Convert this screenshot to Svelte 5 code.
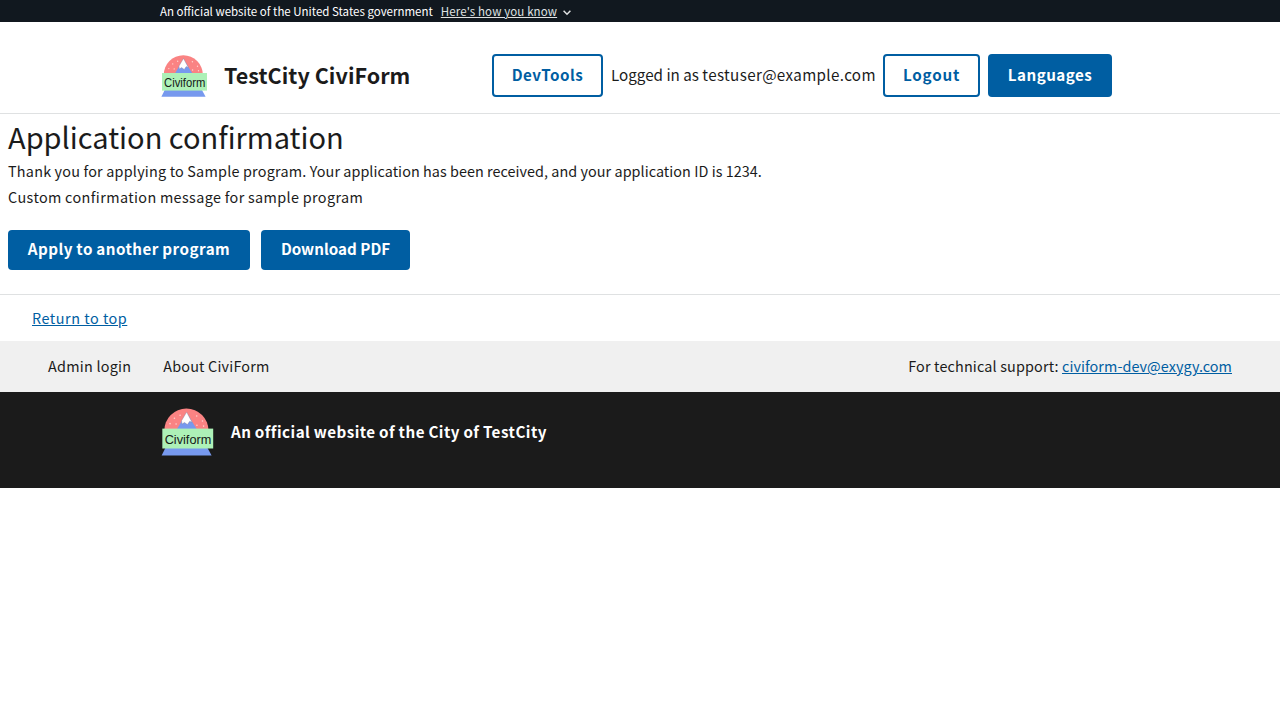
<script>
  const account = 'testuser@example.com';
  const flakes = [[12.7, 10.9], [17.7, 8.2], [32.4, 8.8], [37.5, 13.2], [32.6, 17], [8.8, 15.6], [14.2, 15.9], [38.5, 17.8]];
</script>

{#snippet logo()}
  <svg class="logo" viewBox="0 0 48 46" aria-label="Civiform">
    <path d="M3.7 22 A19.6 19.7 0 0 1 42.9 22 Z" fill="#fa8383" />
    {#each flakes as [x, y]}
      <circle cx={x} cy={y} r=".7" fill="#ffd3cf" />
    {/each}
    <path d="M14.6 21 L23.5 6 L32.8 21 Z" fill="#7799ee" />
    <path d="M23.5 5.4 L28.3 14.4 L26.2 13.6 L24.2 16.4 L21.6 14.6 L19.4 16 L19 13 Z" fill="#fff" stroke="#817d96" stroke-width=".35" />
    <path d="M5.2 36 H41.4 L45.6 43.8 H1.4 Z" fill="#7799ee" />
    <rect x="2" y="20" width="45" height="17.6" fill="#adf1b7" />
    <text x="4.1" y="33.7" textLength="41.2" lengthAdjust="spacingAndGlyphs" font-size="12" fill="#152018">Civiform</text>
  </svg>
{/snippet}

<div class="page">
  <div class="banner">
    <span>An official website of the United States government</span>
    <a href="#how">Here's how you know</a>
    <svg class="chevron" viewBox="0 0 8 6"><path d="M.6 .8 L4 4.2 L7.4 .8" /></svg>
  </div>

  <header>
    <div class="brand">{@render logo()}<strong>TestCity CiviForm</strong></div>
    <nav>
      <button class="outline dev">DevTools</button>
      <span class="who">Logged in as <span class="account">{account}</span></span>
      <button class="outline out">Logout</button>
      <button class="lang">Languages</button>
    </nav>
  </header>

  <main>
    <h1>Application confirmation</h1>
    <p><span class="thanks">Thank you for applying to Sample program.</span>{' '}<span class="received">Your application has been received, and your application ID is 1234.</span></p>
    <p class="custom">Custom confirmation message for sample program</p>
    <div class="actions">
      <button class="apply">Apply to another program</button>
      <button class="pdf">Download PDF</button>
    </div>
  </main>

  <footer>
    <div class="top"><a href="#top">Return to top</a></div>
    <div class="links">
      <span class="admin">Admin login</span>
      <span class="about">About CiviForm</span>
      <span class="support">For technical support: <a href="mailto:civiform-dev@exygy.com">civiform-dev@exygy.com</a></span>
    </div>
    <div class="identity">{@render logo()}<strong>An official website of the City of TestCity</strong></div>
  </footer>
</div>

<style>
  .page {
    font-family: "Noto Sans CJK SC", "Noto Sans", sans-serif;
    font-size: 15.2px;
    color: #1b1b1b;
    background: #fff;
    white-space: nowrap;
  }
  a { color: #005ea2; text-decoration: underline; }
  h1, p { margin: 0; font-weight: 400; }
  .banner {
    display: flex;
    box-sizing: border-box;
    height: 22px;
    padding-left: 160px;
    background: #11181f;
    color: #fff;
    font-size: 11.5px;
    line-height: 22px;
  }
  .banner a { margin-left: 8px; color: #dfe1e2; letter-spacing: .12px; }
  .chevron { width: 8px; height: 6px; margin: 10px 0 0 6px; fill: none; stroke: #dfe1e2; stroke-width: 1.5; }
  header {
    display: flex;
    justify-content: space-between;
    box-sizing: border-box;
    height: 92px;
    padding: 31px 168px 0 160px;
    border-bottom: 1px solid #dfe1e2;
  }
  .brand { display: flex; gap: 16px; }
  .brand strong { font-size: 21.5px; line-height: 43px; letter-spacing: .05px; }
  .brand .logo { width: 48px; height: 46px; }
  .logo { display: block; font-family: "Liberation Sans", sans-serif; }
  nav { display: flex; gap: 8px; line-height: 43px; }
  nav button { height: 43px; margin-top: 1px; }
  button {
    box-sizing: border-box;
    height: 40px;
    padding: 0 0 2px;
    border: 0;
    border-radius: 4px;
    background: #005ea2;
    color: #fff;
    font: 700 15.2px/1 "Noto Sans CJK SC", "Noto Sans", sans-serif;
  }
  .outline { border: 2px solid #005ea2; background: #fff; color: #005ea2; }
  .dev { width: 111px; letter-spacing: .5px; }
  .out { width: 97px; letter-spacing: .8px; }
  .lang { width: 124px; letter-spacing: .45px; }
  .who { width: 264px; }
  .account { letter-spacing: .35px; }
  main { height: 180px; padding-left: 8px; }
  h1 { font-size: 29px; line-height: 44px; }
  p { font-size: 14.4px; line-height: 26px; }
  .thanks { letter-spacing: .23px; word-spacing: -.2px; }
  .received { letter-spacing: .045px; }
  .custom { letter-spacing: .4px; word-spacing: -.4px; }
  .actions { display: flex; gap: 11px; margin-top: 20px; }
  .apply { width: 242px; letter-spacing: .47px; word-spacing: -.5px; }
  .pdf { width: 149px; }
  .top { box-sizing: border-box; height: 47px; border-top: 1px solid #dfe1e2; padding-left: 32px; font-size: 14.4px; line-height: 45px; letter-spacing: .52px; }
  .links { display: flex; gap: 32px; height: 51px; padding: 0 48px; background: #f0f0f0; font-size: 14.4px; line-height: 49px; }
  .admin { letter-spacing: .24px; }
  .about { letter-spacing: .18px; }
  .support { margin-left: auto; letter-spacing: .15px; }
  .support a { letter-spacing: .06px; }
  .identity { display: flex; gap: 16.6px; box-sizing: border-box; height: 96px; padding: 14px 0 0 160px; background: #1b1b1b; color: #fff; }
  .identity .logo { width: 54.4px; height: 52px; }
  .identity strong { line-height: 50px; letter-spacing: .47px; word-spacing: -.46px; }
</style>
